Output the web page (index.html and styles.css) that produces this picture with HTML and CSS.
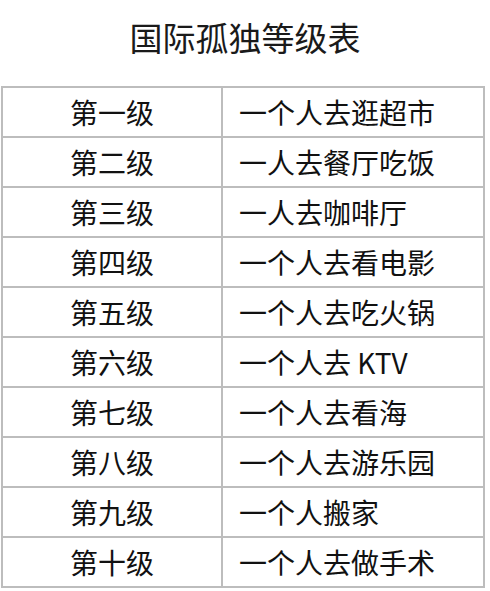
FILE: index.html
```html
<!DOCTYPE html>
<html lang="zh-CN">
<head>
<meta charset="utf-8">
<title>国际孤独等级表</title>
<link rel="stylesheet" href="styles.css">
</head>
<body>
<div class="page">
  <h1 class="title">国际孤独等级表</h1>
  <div class="table">
    <div class="cell level">第一级</div><div class="cell desc">一个人去逛超市</div>
    <div class="cell level">第二级</div><div class="cell desc">一人去餐厅吃饭</div>
    <div class="cell level">第三级</div><div class="cell desc">一人去咖啡厅</div>
    <div class="cell level">第四级</div><div class="cell desc">一个人去看电影</div>
    <div class="cell level">第五级</div><div class="cell desc">一个人去吃火锅</div>
    <div class="cell level">第六级</div><div class="cell desc">一个人去 KTV</div>
    <div class="cell level">第七级</div><div class="cell desc">一个人去看海</div>
    <div class="cell level">第八级</div><div class="cell desc">一个人去游乐园</div>
    <div class="cell level">第九级</div><div class="cell desc">一个人搬家</div>
    <div class="cell level">第十级</div><div class="cell desc">一个人去做手术</div>
  </div>
</div>
</body>
</html>
```
FILE: styles.css
```css
html, body {
  margin: 0;
  padding: 0;
  background: #ffffff;
}
body {
  font-family: "Noto Sans CJK SC", "Noto Sans", sans-serif;
  color: #111111;
}
.page {
  width: 490px;
  height: 591px;
  overflow: hidden;
}
.title {
  margin: 0;
  height: 86px;
  line-height: 74px;
  font-size: 33px;
  font-weight: 400;
  text-align: center;
  color: #1a1a1a;
}
.table {
  margin-left: 1px;
  width: 482px;
  display: grid;
  grid-template-columns: 220px 262px;
  grid-auto-rows: 50px;
  border-top: 2px solid #bdbdbd;
  border-left: 2px solid #bdbdbd;
}
.cell {
  border-right: 2px solid #bdbdbd;
  border-bottom: 2px solid #bdbdbd;
  font-size: 28px;
  line-height: 48px;
  white-space: nowrap;
}
.level {
  text-align: center;
}
.desc {
  padding-left: 16px;
}
```
